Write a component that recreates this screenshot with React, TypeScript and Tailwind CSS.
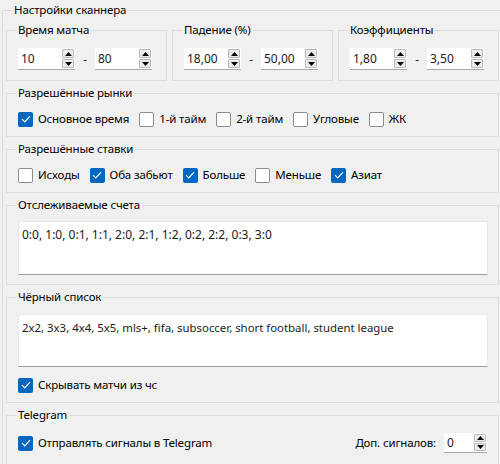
import React from "react";

const font = { fontFamily: '"Noto Sans", "Liberation Sans", sans-serif' };

function Arrows() {
  return (
    <div className="flex w-[13px] flex-col gap-[1px] py-[1px] pr-[1px]">
      <div className="flex flex-1 items-center justify-center rounded-[1px] border border-[#b9b9b9] bg-[#ececec]">
        <svg width="7" height="4" viewBox="0 0 7 4">
          <path d="M0 4 L3.5 0 L7 4 Z" fill="#000" />
        </svg>
      </div>
      <div className="flex flex-1 items-center justify-center rounded-[1px] border border-[#b9b9b9] bg-[#ececec]">
        <svg width="7" height="4" viewBox="0 0 7 4">
          <path d="M0 0 L3.5 4 L7 0 Z" fill="#000" />
        </svg>
      </div>
    </div>
  );
}

function Spin({ value, className = "h-[22px] w-[57px]" }: { value: string; className?: string }) {
  return (
    <div className={`flex border-b border-[#a8a8a8] bg-white ${className}`}>
      <div className="flex flex-1 items-center pl-[3px] text-[12px] tracking-normal text-[#1b1b1b]">{value}</div>
      <Arrows />
    </div>
  );
}

function Range({ title, from, to }: { title: string; from: string; to: string }) {
  return (
    <Group title={title} className="pl-[11px] pr-[10px] pt-[10px] pb-[10px]">
      <div className="flex items-center">
        <Spin value={from} />
        <div className="w-[20px] text-center">-</div>
        <Spin value={to} />
      </div>
    </Group>
  );
}

function Group({
  title,
  className = "",
  children,
}: {
  title: string;
  className?: string;
  children: React.ReactNode;
}) {
  return (
    <fieldset className={`border border-[#dcdcdc] ${className}`}>
      <legend className="ml-[-2px] px-[2px] leading-[16px]">{title}</legend>
      {children}
    </fieldset>
  );
}

function Check({ label, checked = false }: { label: string; checked?: boolean }) {
  return (
    <label className="flex items-center gap-[5px] leading-[16px]">
      {checked ? (
        <span className="flex h-[15px] w-[15px] items-center justify-center rounded-[2px] bg-[#0067c0]">
          <svg width="10" height="8" viewBox="0 0 10 8">
            <path d="M1 4.2 L3.8 7 L9 1.2" fill="none" stroke="#fff" strokeWidth="1.2" />
          </svg>
        </span>
      ) : (
        <span className="h-[15px] w-[15px] rounded-[2px] border border-[#8d8d8d] bg-white" />
      )}
      <span>{label}</span>
    </label>
  );
}

function TextBox({ text, h, size }: { text: string; h: string; size: string }) {
  return (
    <div
      className={`border border-[#e8e8e8] border-b-[#9c9c9c] bg-white px-[3px] pt-[4px] tracking-normal text-[#1b1b1b] ${h} ${size}`}
    >
      {text}
    </div>
  );
}

export default function App() {
  return (
    <div
      className="h-[464px] w-[500px] overflow-hidden bg-[#f0f0f0] pt-[2px] text-[11.5px] tracking-[-0.15px] text-black"
      style={font}
    >
      <fieldset className="ml-[2px] w-[503px] border border-[#dcdcdc] pl-[3px] pr-[5px] pt-[4px]">
        <legend className="ml-[6px] px-[2px] leading-[16px]">Настройки сканнера</legend>

        <div className="flex flex-col gap-[4px]">
          <div className="grid grid-cols-3 gap-[5px]">
            <Range title="Время матча" from="10" to="80" />
            <Range title="Падение (%)" from="18,00" to="50,00" />
            <Range title="Коэффициенты" from="1,80" to="3,50" />
          </div>

          <Group title="Разрешённые рынки" className="pl-[11px] pt-[10px] pb-[9px]">
            <div className="flex gap-[10px]">
              <Check label="Основное время" checked />
              <Check label="1-й тайм" />
              <Check label="2-й тайм" />
              <Check label="Угловые" />
              <Check label="ЖК" />
            </div>
          </Group>

          <Group title="Разрешённые ставки" className="pl-[11px] pt-[10px] pb-[9px]">
            <div className="flex gap-[10px]">
              <Check label="Исходы" />
              <Check label="Оба забьют" checked />
              <Check label="Больше" checked />
              <Check label="Меньше" />
              <Check label="Азиат" checked />
            </div>
          </Group>

          <Group title="Отслеживаемые счета" className="pl-[11px] pr-[10px] pt-[8px] pb-[9px]">
            <TextBox
              h="h-[54px]"
              size="text-[12px]"
              text="0:0, 1:0, 0:1, 1:1, 2:0, 2:1, 1:2, 0:2, 2:2, 0:3, 3:0"
            />
          </Group>

          <Group title="Чёрный список" className="pl-[11px] pr-[10px] pt-[9px] pb-[9px]">
            <TextBox
              h="h-[53px]"
              size="text-[11.4px]"
              text="2x2, 3x3, 4x4, 5x5, mls+, fifa, subsoccer, short football, student league"
            />
            <div className="mt-[10px]">
              <Check label="Скрывать матчи из чс" checked />
            </div>
          </Group>

          <Group title="Telegram" className="pl-[11px] pr-[11px] pt-[10px] pb-[20px]">
            <div className="flex items-center justify-between">
              <Check label="Отправлять сигналы в Telegram" checked />
              <div className="flex items-center gap-[8px]">
                <span>Доп. сигналов:</span>
                <Spin value="0" className="h-[20px] w-[43px]" />
              </div>
            </div>
          </Group>
        </div>
      </fieldset>
    </div>
  );
}
